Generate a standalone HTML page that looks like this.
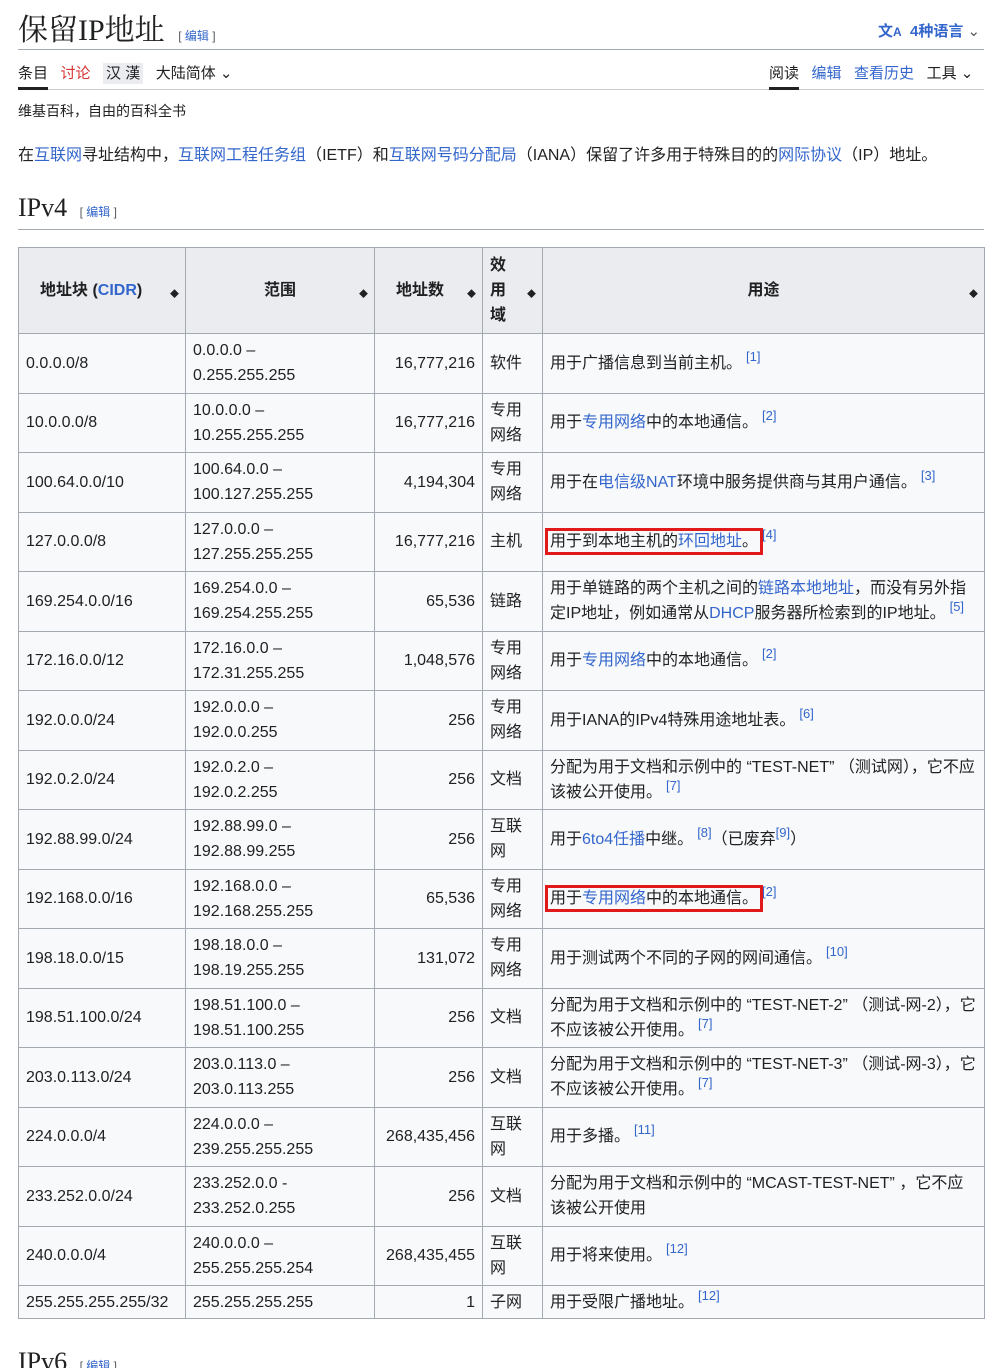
<!DOCTYPE html>
<html><head><meta charset="utf-8"><style>
body{margin:0;background:#fff;font-family:"Liberation Sans","Noto Sans CJK SC",sans-serif;color:#202122;font-size:16px;}
a{color:#3366cc;text-decoration:none}
.wrap{position:relative;width:1003px;height:1368px;overflow:hidden}
.abs{position:absolute}
h1{position:absolute;left:18px;top:5px;margin:0;font:400 30px "Liberation Serif","Noto Serif CJK SC",serif;}
.ed{font-size:12px;color:#54595d;font-family:"Liberation Sans","Noto Sans CJK SC",sans-serif;margin-left:6px}
.ed a{color:#3366cc}
.line{position:absolute;left:18px;width:966px;height:1px;background:#a2a9b1}
sup{font-size:13px;color:#3366cc;vertical-align:7px;margin-left:4px;line-height:0}
table{position:absolute;left:18px;top:247px;border-collapse:collapse;table-layout:fixed;width:966px;background:#f8f9fa;font-size:16px}
td,th{border:1px solid #a2a9b1;padding:0 7px;line-height:25px;vertical-align:middle}
th{background:#eaecf0;font-weight:bold;position:relative}
th .s{position:absolute;right:6px;top:34px;font-size:9px}
tr{height:59.5px}
.r{text-align:right}
.box{outline:3px solid #e0191b;outline-offset:2px}
</style></head><body><div class="wrap">
<h1>保留IP地址 <span class="ed">[ <a>编辑</a> ]</span></h1>
<div class="abs" style="left:878px;top:20px;font-size:15px;color:#3366cc;font-weight:bold">文<span style="font-size:12px">A</span>&nbsp; 4种语言 <span style="font-weight:normal;color:#54595d">&#8964;</span></div>
<div class="line" style="top:49px"></div>
<div class="abs" style="left:18px;top:62px;font-size:15px">条目&nbsp;&nbsp; <span style="color:#d73333">讨论</span>&nbsp;&nbsp; <span style="background:#eaecf0;padding:2px 3px">汉 漢</span>&nbsp;&nbsp; 大陆简体 &#8964;</div>
<div class="abs" style="left:769px;top:62px;font-size:15px">阅读&nbsp;&nbsp; <a>编辑</a>&nbsp;&nbsp; <a>查看历史</a>&nbsp;&nbsp; 工具 &#8964;</div>
<div class="line" style="top:89px;background:#c8ccd1"></div>
<div class="abs" style="left:18px;top:87px;width:30px;height:3px;background:#202122"></div>
<div class="abs" style="left:769px;top:87px;width:30px;height:3px;background:#202122"></div>
<div class="abs" style="left:18px;top:101px;font-size:14px">维基百科，自由的百科全书</div>
<div class="abs" style="left:18px;top:141px">在<a>互联网</a>寻址结构中，<a>互联网工程任务组</a>（IETF）和<a>互联网号码分配局</a>（IANA）保留了许多用于特殊目的的<a>网际协议</a>（IP）地址。</div>
<div class="abs" style="left:18px;top:193px;font:400 26px 'Liberation Serif','Noto Serif CJK SC',serif">IPv4 <span class="ed">[ <a>编辑</a> ]</span></div>
<div class="line" style="top:229px"></div>
<table>
<colgroup><col style="width:167px"><col style="width:189px"><col style="width:108px"><col style="width:60px"><col style="width:442px"></colgroup>
<tr style="height:86px"><th style="text-align:left;padding-left:21px">地址块 (<a>CIDR</a>)<span class="s">◆</span></th><th>范围<span class="s">◆</span></th><th style="text-align:left;padding-left:21px">地址数<span class="s">◆</span></th><th style="text-align:left">效<br>用<br>域<span class="s">◆</span></th><th>用途<span class="s">◆</span></th></tr>
<tr><td>0.0.0.0/8</td><td>0.0.0.0 –<br>0.255.255.255</td><td class="r">16,777,216</td><td>软件</td><td>用于广播信息到当前主机。<sup>[1]</sup></td></tr>
<tr><td>10.0.0.0/8</td><td>10.0.0.0 –<br>10.255.255.255</td><td class="r">16,777,216</td><td>专用<br>网络</td><td>用于<a>专用网络</a>中的本地通信。<sup>[2]</sup></td></tr>
<tr><td>100.64.0.0/10</td><td>100.64.0.0 –<br>100.127.255.255</td><td class="r">4,194,304</td><td>专用<br>网络</td><td>用于在<a>电信级NAT</a>环境中服务提供商与其用户通信。<sup>[3]</sup></td></tr>
<tr><td>127.0.0.0/8</td><td>127.0.0.0 –<br>127.255.255.255</td><td class="r">16,777,216</td><td>主机</td><td><span class="box">用于到本地主机的<a>环回地址</a>。</span><sup>[4]</sup></td></tr>
<tr><td>169.254.0.0/16</td><td>169.254.0.0 –<br>169.254.255.255</td><td class="r">65,536</td><td>链路</td><td>用于单链路的两个主机之间的<a>链路本地地址</a>，而没有另外指定IP地址，例如通常从<a>DHCP</a>服务器所检索到的IP地址。<sup>[5]</sup></td></tr>
<tr><td>172.16.0.0/12</td><td>172.16.0.0 –<br>172.31.255.255</td><td class="r">1,048,576</td><td>专用<br>网络</td><td>用于<a>专用网络</a>中的本地通信。<sup>[2]</sup></td></tr>
<tr><td>192.0.0.0/24</td><td>192.0.0.0 –<br>192.0.0.255</td><td class="r">256</td><td>专用<br>网络</td><td>用于IANA的IPv4特殊用途地址表。<sup>[6]</sup></td></tr>
<tr><td>192.0.2.0/24</td><td>192.0.2.0 –<br>192.0.2.255</td><td class="r">256</td><td>文档</td><td>分配为用于文档和示例中的 “TEST-NET” （测试网），它不应该被公开使用。<sup>[7]</sup></td></tr>
<tr><td>192.88.99.0/24</td><td>192.88.99.0 –<br>192.88.99.255</td><td class="r">256</td><td>互联<br>网</td><td>用于<a>6to4任播</a>中继。<sup>[8]</sup>（已废弃<sup style="margin:0">[9]</sup>）</td></tr>
<tr><td>192.168.0.0/16</td><td>192.168.0.0 –<br>192.168.255.255</td><td class="r">65,536</td><td>专用<br>网络</td><td><span class="box">用于<a>专用网络</a>中的本地通信。</span><sup>[2]</sup></td></tr>
<tr><td>198.18.0.0/15</td><td>198.18.0.0 –<br>198.19.255.255</td><td class="r">131,072</td><td>专用<br>网络</td><td>用于测试两个不同的子网的网间通信。<sup>[10]</sup></td></tr>
<tr><td>198.51.100.0/24</td><td>198.51.100.0 –<br>198.51.100.255</td><td class="r">256</td><td>文档</td><td>分配为用于文档和示例中的 “TEST-NET-2” （测试-网-2），它不应该被公开使用。<sup>[7]</sup></td></tr>
<tr><td>203.0.113.0/24</td><td>203.0.113.0 –<br>203.0.113.255</td><td class="r">256</td><td>文档</td><td>分配为用于文档和示例中的 “TEST-NET-3” （测试-网-3），它不应该被公开使用。<sup>[7]</sup></td></tr>
<tr><td>224.0.0.0/4</td><td>224.0.0.0 –<br>239.255.255.255</td><td class="r">268,435,456</td><td>互联<br>网</td><td>用于多播。<sup>[11]</sup></td></tr>
<tr><td>233.252.0.0/24</td><td>233.252.0.0 -<br>233.252.0.255</td><td class="r">256</td><td>文档</td><td>分配为用于文档和示例中的 “MCAST-TEST-NET” ，它不应该被公开使用</td></tr>
<tr><td>240.0.0.0/4</td><td>240.0.0.0 –<br>255.255.255.254</td><td class="r">268,435,455</td><td>互联<br>网</td><td>用于将来使用。<sup>[12]</sup></td></tr>
<tr style="height:33px"><td style="padding-right:0">255.255.255.255/32</td><td>255.255.255.255</td><td class="r">1</td><td>子网</td><td>用于受限广播地址。<sup>[12]</sup></td></tr>
</table>
<div class="abs" style="left:18px;top:1347px;font:400 26px 'Liberation Serif','Noto Serif CJK SC',serif">IPv6 <span class="ed">[ <a>编辑</a> ]</span></div>
</div></body></html>
